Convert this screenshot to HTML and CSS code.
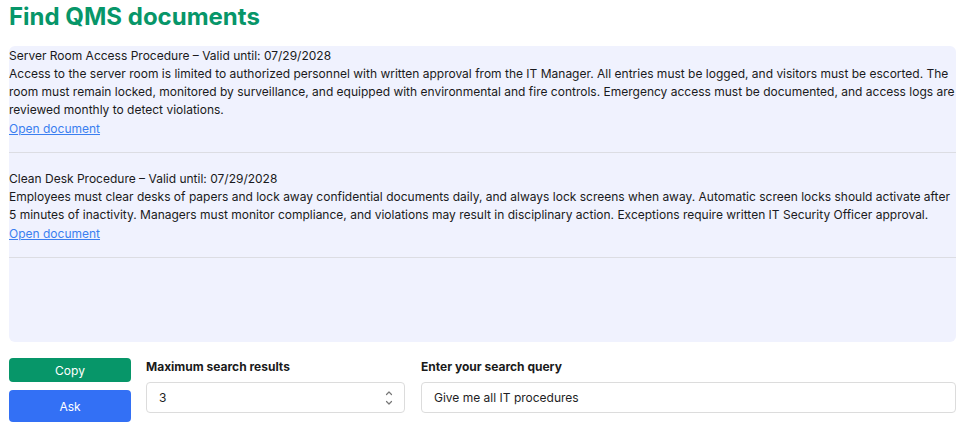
FILE: index.html
```html
<!DOCTYPE html>
<html lang="en">
<head>
<meta charset="utf-8">
<title>Find QMS documents</title>
<link rel="stylesheet" href="styles.css">
</head>
<body>
<div class="page">
  <h1 class="title">Find QMS documents</h1>
  <div class="results">
    <div class="item">
      <div class="item-title">Server Room Access Procedure – Valid until: 07/29/2028</div>
      <div class="item-text">Access to the server room is limited to authorized personnel with written approval from the IT Manager. All entries must be logged, and visitors must be escorted. The room must remain locked, monitored by surveillance, and equipped with environmental and fire controls. Emergency access must be documented, and access logs are reviewed monthly to detect violations.</div>
      <a class="item-link" href="#">Open document</a>
    </div>
    <div class="item">
      <div class="item-title">Clean Desk Procedure – Valid until: 07/29/2028</div>
      <div class="item-text">Employees must clear desks of papers and lock away confidential documents daily, and always lock screens when away. Automatic screen locks should activate after 5 minutes of inactivity. Managers must monitor compliance, and violations may result in disciplinary action. Exceptions require written IT Security Officer approval.</div>
      <a class="item-link" href="#">Open document</a>
    </div>
  </div>
  <div class="controls">
    <div class="buttons">
      <button class="btn btn-copy">Copy</button>
      <button class="btn btn-ask">Ask</button>
    </div>
    <div class="group group-max">
      <label class="label">Maximum search results</label>
      <div class="field">
        <input class="field-input" type="text" value="3">
        <svg class="spin" width="10" height="22" viewBox="0 0 10 22" aria-hidden="true">
          <path d="M2.5 7.5 L5 5 L7.5 7.5" fill="none" stroke="#777" stroke-width="1.2" stroke-linecap="round" stroke-linejoin="round"/>
          <path d="M2.5 14.5 L5 17 L7.5 14.5" fill="none" stroke="#777" stroke-width="1.2" stroke-linecap="round" stroke-linejoin="round"/>
        </svg>
      </div>
    </div>
    <div class="group group-query">
      <label class="label">Enter your search query</label>
      <div class="field">
        <input class="field-input" type="text" value="Give me all IT procedures">
      </div>
    </div>
  </div>
</div>
</body>
</html>
```

FILE: styles.css
```css
* { box-sizing: border-box; }
html, body { margin: 0; padding: 0; background: #ffffff; }
body {
  font-family: Inter, "Noto Sans", sans-serif;
  font-size: 12px;
  color: #1a1a20;
}
.page {
  width: 956px;
  padding: 1px 0 0 9px;
}
.title {
  margin: 0 0 13px;
  font-size: 24px;
  line-height: 32px;
  font-weight: 700;
  color: #079669;
}
.results {
  height: 296px;
  background: #f0f2fe;
  border-radius: 6px;
}
.item {
  line-height: 18px;
  padding: 1px 0 14px;
  border-bottom: 1px solid #dcdde3;
}
.item + .item { padding-top: 17px; }
.item-link {
  display: inline-block;
  margin-top: 1px;
  color: #3b7ff0;
  text-decoration: underline;
}
.controls {
  display: flex;
  margin-top: 16px;
}
.buttons {
  width: 122px;
  display: flex;
  flex-direction: column;
  gap: 8px;
  margin-right: 15px;
}
.btn {
  border: none;
  border-radius: 4px;
  color: #ffffff;
  font-family: Inter, "Noto Sans", sans-serif;
  font-size: 12px;
  padding: 0;
}
.btn-copy { height: 24px; background: #079669; }
.btn-ask { height: 32px; background: #3370f5; }
.group { display: flex; flex-direction: column; }
.group-max { width: 259px; margin-right: 16px; }
.group-query { width: 535px; }
.label {
  font-weight: 700;
  line-height: 18px;
  margin: 0 0 6px;
  color: #1a1a1a;
}
.field {
  height: 31px;
  border: 1px solid #dcdcdc;
  border-radius: 4px;
  background: #ffffff;
  display: flex;
  align-items: center;
  padding: 0 12px 0 12px;
}
.field-input {
  flex: 1;
  min-width: 0;
  border: none;
  outline: none;
  background: transparent;
  padding: 0;
  font-family: Inter, "Noto Sans", sans-serif;
  font-size: 12px;
  color: #1e1e24;
}
.spin { flex: none; margin-right: -2px; }
```
